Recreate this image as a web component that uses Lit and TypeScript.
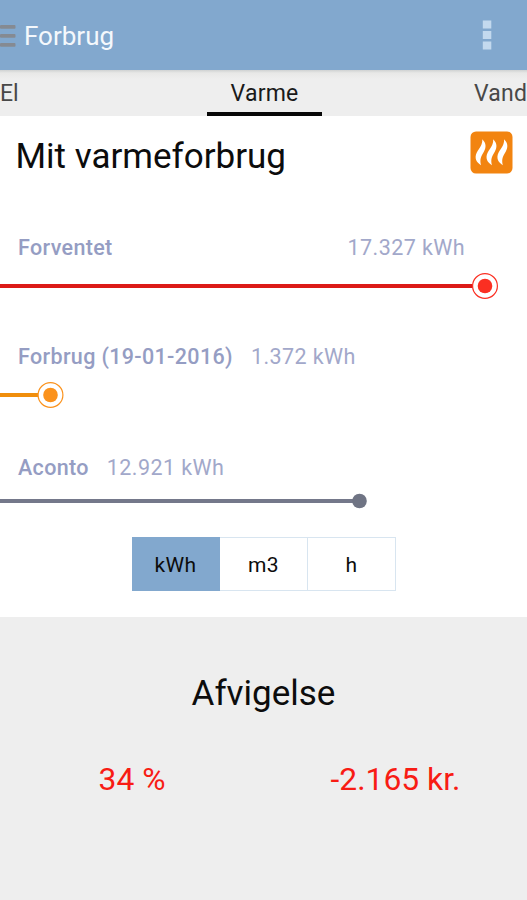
import { LitElement, html, svg, css } from "lit";
import { customElement, property } from "lit/decorators.js";
import { classMap } from "lit/directives/class-map.js";

@customElement("usage-meter")
class UsageMeter extends LitElement {
  @property() label = "";
  @property() value = "";
  @property() tone = "red";
  @property({ type: Number }) position = 0;
  @property({ type: Number }) gap = 18;

  static styles = css`
    :host {
      display: block;
    }
    .text {
      display: flex;
      height: 28px;
      line-height: 28px;
      padding-left: 18px;
      font-size: 21.5px;
      white-space: nowrap;
    }
    .label {
      font-weight: 500;
      letter-spacing: 0.35px;
      color: #959dc3;
    }
    .value {
      letter-spacing: 0.42px;
      color: #a2a8ca;
    }
    .track {
      display: block;
      width: 100%;
      height: 30px;
      margin-top: 9px;
    }
    .red {
      --line: #dc1a18;
      --dot: #fb2f22;
    }
    .orange {
      --line: #f08e0c;
      --dot: #fb921c;
    }
    .grey {
      --line: #74788a;
      --dot: #6f7484;
      margin-top: 4px;
    }
    .line {
      stroke: var(--line);
      stroke-width: 4;
    }
    .dot {
      fill: var(--dot);
    }
    .ring {
      fill: #fff;
      stroke: var(--dot);
      stroke-width: 1.2;
    }
  `;

  render() {
    const x = this.position;
    const ring = svg`<circle class="ring" cx=${x} cy="15" r="12.4"></circle>`;
    return html`
      <div class="text">
        <span class="label">${this.label}</span>
        <span class="value" style="margin-left:${this.gap}px">${this.value}</span>
      </div>
      <svg class="track ${this.tone}" viewBox="0 0 527 30">
        <line class="line" x1="0" y1="15" x2=${x} y2="15" />
        ${this.tone === "grey" ? null : ring}
        <circle class="dot" cx=${x} cy="15" r="7.3" />
      </svg>
    `;
  }
}

@customElement("app-root")
class AppRoot extends LitElement {
  static styles = css`
    :host {
      display: flex;
      flex-direction: column;
      width: 527px;
      height: 900px;
      overflow: hidden;
      background: #fff;
      font-family: Roboto, "Liberation Sans", sans-serif;
      color: #0c0c0c;
    }
    header {
      display: flex;
      align-items: center;
      height: 70px;
      box-sizing: border-box;
      padding: 1px 34px 0 0;
      background: #82a8ce;
      color: #f4f8fc;
      font-size: 26px;
    }
    .burger {
      width: 16px;
      height: 24px;
      margin-right: 8px;
      fill: #858a92;
    }
    .heading {
      flex: 1;
    }
    .more {
      width: 12px;
      height: 32px;
      fill: #c3d9ee;
    }
    nav {
      display: grid;
      grid-template-columns: 207px 115px 1fr;
      height: 46px;
      background: linear-gradient(#cfd2d2, #e8e8e7 3px, #eeeeee 9px);
      font-size: 23px;
      line-height: 47px;
      white-space: nowrap;
      color: #484848;
    }
    .tab {
      box-sizing: border-box;
      height: 46px;
    }
    .active {
      text-align: center;
      color: #1a1a1a;
      letter-spacing: 0.2px;
      border-bottom: 4px solid #080808;
    }
    .last {
      padding-left: 152px;
      letter-spacing: 0.2px;
    }
    .title {
      display: flex;
      justify-content: space-between;
      height: 80px;
      padding: 0 14px 0 15.5px;
      font-size: 35px;
      line-height: 82px;
    }
    .flames {
      width: 43px;
      height: 43px;
      margin-top: 15px;
    }
    .badge {
      fill: #f28410;
    }
    .flame {
      fill: #fff;
    }
    .meters {
      height: 341px;
      padding-top: 38px;
      box-sizing: border-box;
    }
    .second {
      margin-top: 42px;
    }
    .third {
      margin-top: 44px;
    }
    .units {
      display: grid;
      grid-template-columns: 88px 88px 88px;
      align-self: flex-start;
      margin-left: 132px;
      height: 54px;
      font-size: 21px;
      line-height: 54px;
      text-align: center;
      letter-spacing: 0.4px;
    }
    .unit {
      box-sizing: border-box;
      height: 54px;
      border: 1px solid #d8e5f0;
      border-left-width: 0;
    }
    .selected {
      background: #82a8ce;
      border-color: #82a8ce;
    }
    .deviation {
      flex: 1;
      margin-top: 26px;
      background: #eeeeee;
      text-align: center;
    }
    .caption {
      margin-top: 53px;
      font-size: 35px;
      line-height: 48px;
    }
    .figures {
      display: grid;
      grid-template-columns: 264px 263px;
      margin-top: 37px;
      font-size: 31.8px;
      line-height: 48px;
      color: #f81c14;
    }
  `;

  private flame(shift: number) {
    return svg`<path class="flame" transform="translate(${shift} 0)"
      d="M12.3 8.3C16 12 16.5 16 14 20.500C11.2 25 9.5 28 11 34.200C6.5 31.5 4 27 6.8 21.500C9.5 17 12.6 14 12.3 8.300Z"></path>`;
  }

  render() {
    return html`
      <header>
        <svg class="burger" viewBox="0 0 16 24">
          <rect y="1" width="15.5" height="3.8" rx="1" />
          <rect y="10" width="15.5" height="3.8" rx="1" />
          <rect y="19" width="15.5" height="3.8" rx="1" />
        </svg>
        <span class="heading">Forbrug</span>
        <svg class="more" viewBox="0 0 12 32">
          <rect x="1.8" y="0.5" width="8.5" height="8" />
          <rect x="1.8" y="11" width="8.5" height="8" />
          <rect x="1.8" y="21.5" width="8.5" height="8" />
        </svg>
      </header>
      <nav>
        <span class="tab">El</span>
        <span class="tab active">Varme</span>
        <span class="tab last">Vand</span>
      </nav>
      <div class="title">
        <span>Mit varmeforbrug</span>
        <svg class="flames" viewBox="0 0 43 43">
          <rect class="badge" x="0.5" y="0.5" width="42" height="42" rx="5.5" />
          ${[0, 10.9, 21.8].map((shift) => this.flame(shift))}
        </svg>
      </div>
      <div class="meters">
        <usage-meter label="Forventet" value="17.327 kWh" tone="red" .position=${485} .gap=${235}></usage-meter>
        <usage-meter class="second" label="Forbrug (19-01-2016)" value="1.372 kWh" tone="orange" .position=${50.5}></usage-meter>
        <usage-meter class="third" label="Aconto" value="12.921 kWh" tone="grey" .position=${359.5}></usage-meter>
      </div>
      <div class="units">
        ${["kWh", "m3", "h"].map(
          (unit, i) => html`<span class=${classMap({ unit: true, selected: i === 0 })}>${unit}</span>`
        )}
      </div>
      <section class="deviation">
        <div class="caption">Afvigelse</div>
        <div class="figures"><span>34 %</span><span>-2.165 kr.</span></div>
      </section>
    `;
  }
}
